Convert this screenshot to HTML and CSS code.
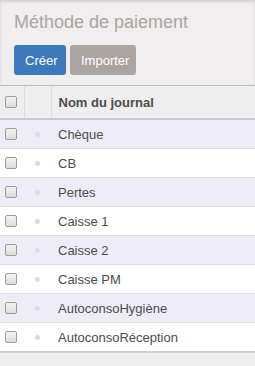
FILE: index.html
```html
<!DOCTYPE html>
<html lang="fr">
<head>
  <meta charset="UTF-8" />
  <title>Méthode de paiement</title>
  <link rel="stylesheet" href="styles.css">
</head>
<body>
  <div class="control-panel">
    <h1 class="breadcrumb">Méthode de paiement</h1>
    <div class="buttons">
      <button class="btn btn-primary">Créer</button>
      <button class="btn btn-default">Importer</button>
    </div>
  </div>

  <table class="list">
    <thead>
      <tr>
        <th class="col-select"><span class="check"></span></th>
        <th class="col-handle"></th>
        <th class="col-name">Nom du journal</th>
      </tr>
    </thead>
    <tbody>
      <tr><td class="col-select"><span class="check"></span></td><td class="col-handle"><span class="dot"></span></td><td>Chèque</td></tr>
      <tr><td class="col-select"><span class="check"></span></td><td class="col-handle"><span class="dot"></span></td><td>CB</td></tr>
      <tr><td class="col-select"><span class="check"></span></td><td class="col-handle"><span class="dot"></span></td><td>Pertes</td></tr>
      <tr><td class="col-select"><span class="check"></span></td><td class="col-handle"><span class="dot"></span></td><td>Caisse 1</td></tr>
      <tr><td class="col-select"><span class="check"></span></td><td class="col-handle"><span class="dot"></span></td><td>Caisse 2</td></tr>
      <tr><td class="col-select"><span class="check"></span></td><td class="col-handle"><span class="dot"></span></td><td>Caisse PM</td></tr>
      <tr><td class="col-select"><span class="check"></span></td><td class="col-handle"><span class="dot"></span></td><td>AutoconsoHygiène</td></tr>
      <tr><td class="col-select"><span class="check"></span></td><td class="col-handle"><span class="dot"></span></td><td>AutoconsoRéception</td></tr>
    </tbody>
    <tfoot>
      <tr><td></td><td></td><td></td></tr>
    </tfoot>
  </table>
</body>
</html>
```

FILE: styles.css
```css
body { margin: 0; background: #f0eeee; font-family: "Liberation Sans", Arial, sans-serif; font-size: 13px; color: #4c4c4c; }

.control-panel { padding: 10px 14px 10px; border-bottom: 1px solid #bdbdbd; box-shadow: inset 0 2px 3px rgba(0,0,0,0.12); }
.breadcrumb { margin: 0; font-size: 18px; font-weight: normal; color: #ada5a1; line-height: 24px; }
.buttons { display: flex; gap: 4px; margin-top: 11px; }
.btn { font-family: inherit; font-size: 13px; height: 30px; padding: 0 11px; border: none; border-radius: 3px; color: #fff; }
.btn-primary { background: #3e79be; width: 52px; }
.btn-default { background: #aba49f; width: 66px; }

.list { width: 100%; border-collapse: collapse; background: #fff; }
.list th, .list td { padding: 0 7px; text-align: left; }
.list thead th { height: 32px; background: #eeeeee; border-bottom: 2px solid #c9c9c9; font-weight: bold; }
.list thead th.col-select, .list thead th.col-handle { border-right: 1px solid #dcdcdc; }
.list tbody td { height: 28px; border-bottom: 1px solid #dedede; }
.list tbody tr:nth-child(odd) { background: #eeedf7; }
.list tfoot td { height: 12px; background: #eeeeee; border-top: 2px solid #cfcfcf; padding: 0; }

.col-select { width: 24px; padding: 0 0 0 5px !important; box-sizing: border-box; }
.col-handle { width: 27px; box-sizing: border-box; }

.check { display: block; width: 10px; height: 10px; border: 1px solid #9c9c9c; border-radius: 2px; background: linear-gradient(#f4f4f4, #dcdcdc); }
.dot { display: block; width: 5px; height: 5px; margin-left: 4px; border-radius: 50%; background: #dcdcdc; }
```
